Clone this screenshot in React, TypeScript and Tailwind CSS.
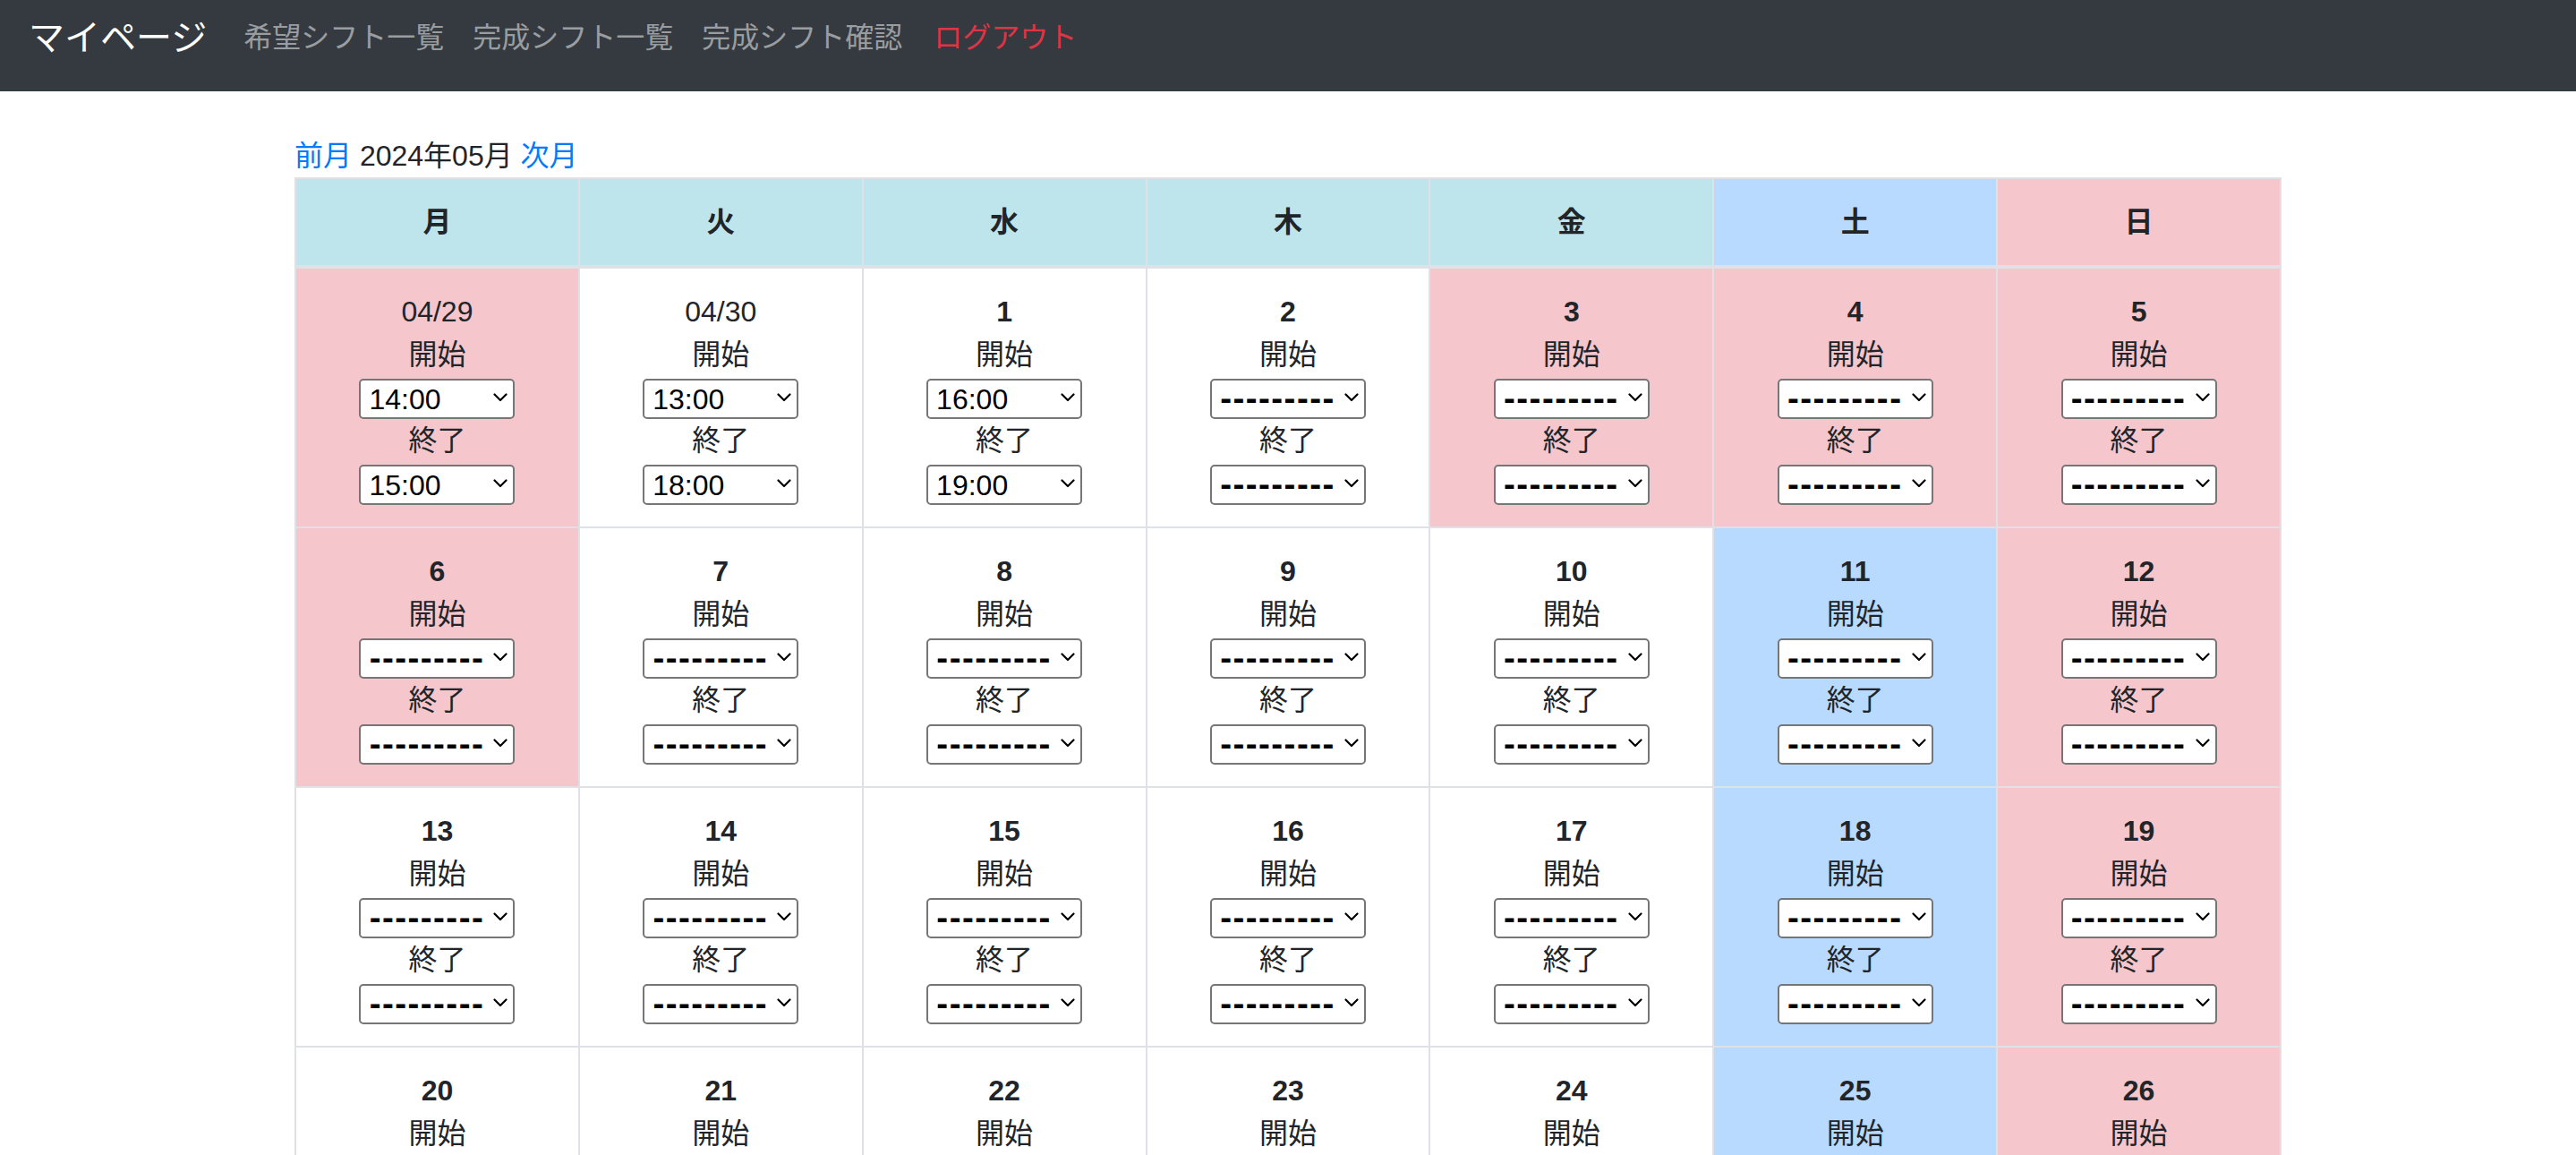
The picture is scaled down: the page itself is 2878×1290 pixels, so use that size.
import clsx from "clsx";

const WEEKDAYS = ["月", "火", "水", "木", "金", "土", "日"];
const HOLIDAYS = ["4-29", "5-3", "5-4", "5-5", "5-6"];
const TIMES = ["09:00", "10:00", "11:00", "12:00", "13:00", "14:00", "15:00", "16:00", "17:00", "18:00", "19:00", "20:00", "21:00", "22:00"];
const PLACEHOLDER = "---------";

// 入力済みの希望シフト
const WISHES: Record<string, [string, string]> = {
  "4-29": ["14:00", "15:00"],
  "4-30": ["13:00", "18:00"],
  "5-1": ["16:00", "19:00"],
};

type Day = { m: number; d: number };

const days: Day[] = [
  { m: 4, d: 29 },
  { m: 4, d: 30 },
  ...Array.from({ length: 31 }, (_, i) => ({ m: 5, d: i + 1 })),
  { m: 6, d: 1 },
  { m: 6, d: 2 },
];

const weeks: Day[][] = Array.from({ length: days.length / 7 }, (_, i) => days.slice(i * 7, i * 7 + 7));

function pad(n: number) {
  return String(n).padStart(2, "0");
}

function TimeSelect({ value }: { value: string }) {
  const empty = value === PLACEHOLDER;
  return (
    <div className="relative w-[174px] h-[45px]">
      <select
        defaultValue={value}
        className={clsx(
          "appearance-none w-full h-full bg-white border-2 border-[#767676] rounded-[5px] pl-[9px] pr-[30px] text-black text-[32px] leading-none outline-none",
          empty ? "font-['DejaVu_Sans',sans-serif] font-bold tracking-[1px]" : "font-['Liberation_Sans',sans-serif]"
        )}
      >
        <option value={PLACEHOLDER}>{PLACEHOLDER}</option>
        {TIMES.map((t) => (
          <option key={t} value={t}>
            {t}
          </option>
        ))}
      </select>
      <svg
        className="absolute right-[8px] top-1/2 -translate-y-1/2 pointer-events-none"
        width="16"
        height="10"
        viewBox="0 0 16 10"
        fill="none"
      >
        <path d="M1.5 1.5 L8 8 L14.5 1.5" stroke="#000" strokeWidth="2.2" strokeLinecap="round" strokeLinejoin="round" />
      </svg>
    </div>
  );
}

function DayCell({ day, col }: { day: Day; col: number }) {
  const key = `${day.m}-${day.d}`;
  const current = day.m === 5;
  const red = col === 6 || HOLIDAYS.includes(key);
  const blue = !red && col === 5;
  const wish = WISHES[key] ?? [PLACEHOLDER, PLACEHOLDER];

  return (
    <td
      className={clsx(
        "border-2 border-[#dee2e6] p-6 align-top text-center",
        red ? "bg-[#f5c6cb]" : blue ? "bg-[#b8daff]" : "bg-white"
      )}
    >
      <div className={clsx("h-12 flex items-center justify-center", current && "font-bold")}>
        {current ? day.d : `${pad(day.m)}/${pad(day.d)}`}
      </div>
      <div className="h-12 flex items-center justify-center">開始</div>
      <div className="h-12 flex items-center justify-center">
        <TimeSelect value={wish[0]} />
      </div>
      <div className="h-12 flex items-center justify-center">終了</div>
      <div className="h-12 flex items-center justify-center">
        <TimeSelect value={wish[1]} />
      </div>
    </td>
  );
}

export default function App() {
  return (
    <div className="min-h-screen bg-white text-[#212529] text-[32px] leading-[48px] font-['Liberation_Sans','Noto_Sans_CJK_JP',sans-serif]">
      <nav className="h-[102px] bg-[#343a40] flex items-center pb-[18px] px-[32px]">
        <a className="text-white text-[40px] leading-[60px] mr-[25px]">マイページ</a>
        <a className="px-4 text-[#9a9da0]">希望シフト一覧</a>
        <a className="px-4 text-[#9a9da0]">完成シフト一覧</a>
        <a className="px-4 text-[#9a9da0]">完成シフト確認</a>
        <a className="px-4 ml-[3px] text-[#dc3545]">ログアウト</a>
      </nav>

      <div className="w-[2220px] mx-auto mt-[48px]">
        <div className="h-12 flex items-center">
          <a className="text-[#007bff]">前月</a>
          <span className="whitespace-pre"> 2024年05月 </span>
          <a className="text-[#007bff]">次月</a>
        </div>

        <table className="w-full table-fixed border-collapse">
          <thead>
            <tr>
              {WEEKDAYS.map((w, i) => (
                <th
                  key={w}
                  className={clsx(
                    "border-2 border-b-4 border-[#dee2e6] p-6 font-bold text-center",
                    i === 6 ? "bg-[#f5c6cb]" : i === 5 ? "bg-[#b8daff]" : "bg-[#bee5eb]"
                  )}
                >
                  {w}
                </th>
              ))}
            </tr>
          </thead>
          <tbody>
            {weeks.map((week, wi) => (
              <tr key={wi}>
                {week.map((day, ci) => (
                  <DayCell key={`${day.m}-${day.d}`} day={day} col={ci} />
                ))}
              </tr>
            ))}
          </tbody>
        </table>
      </div>
    </div>
  );
}
